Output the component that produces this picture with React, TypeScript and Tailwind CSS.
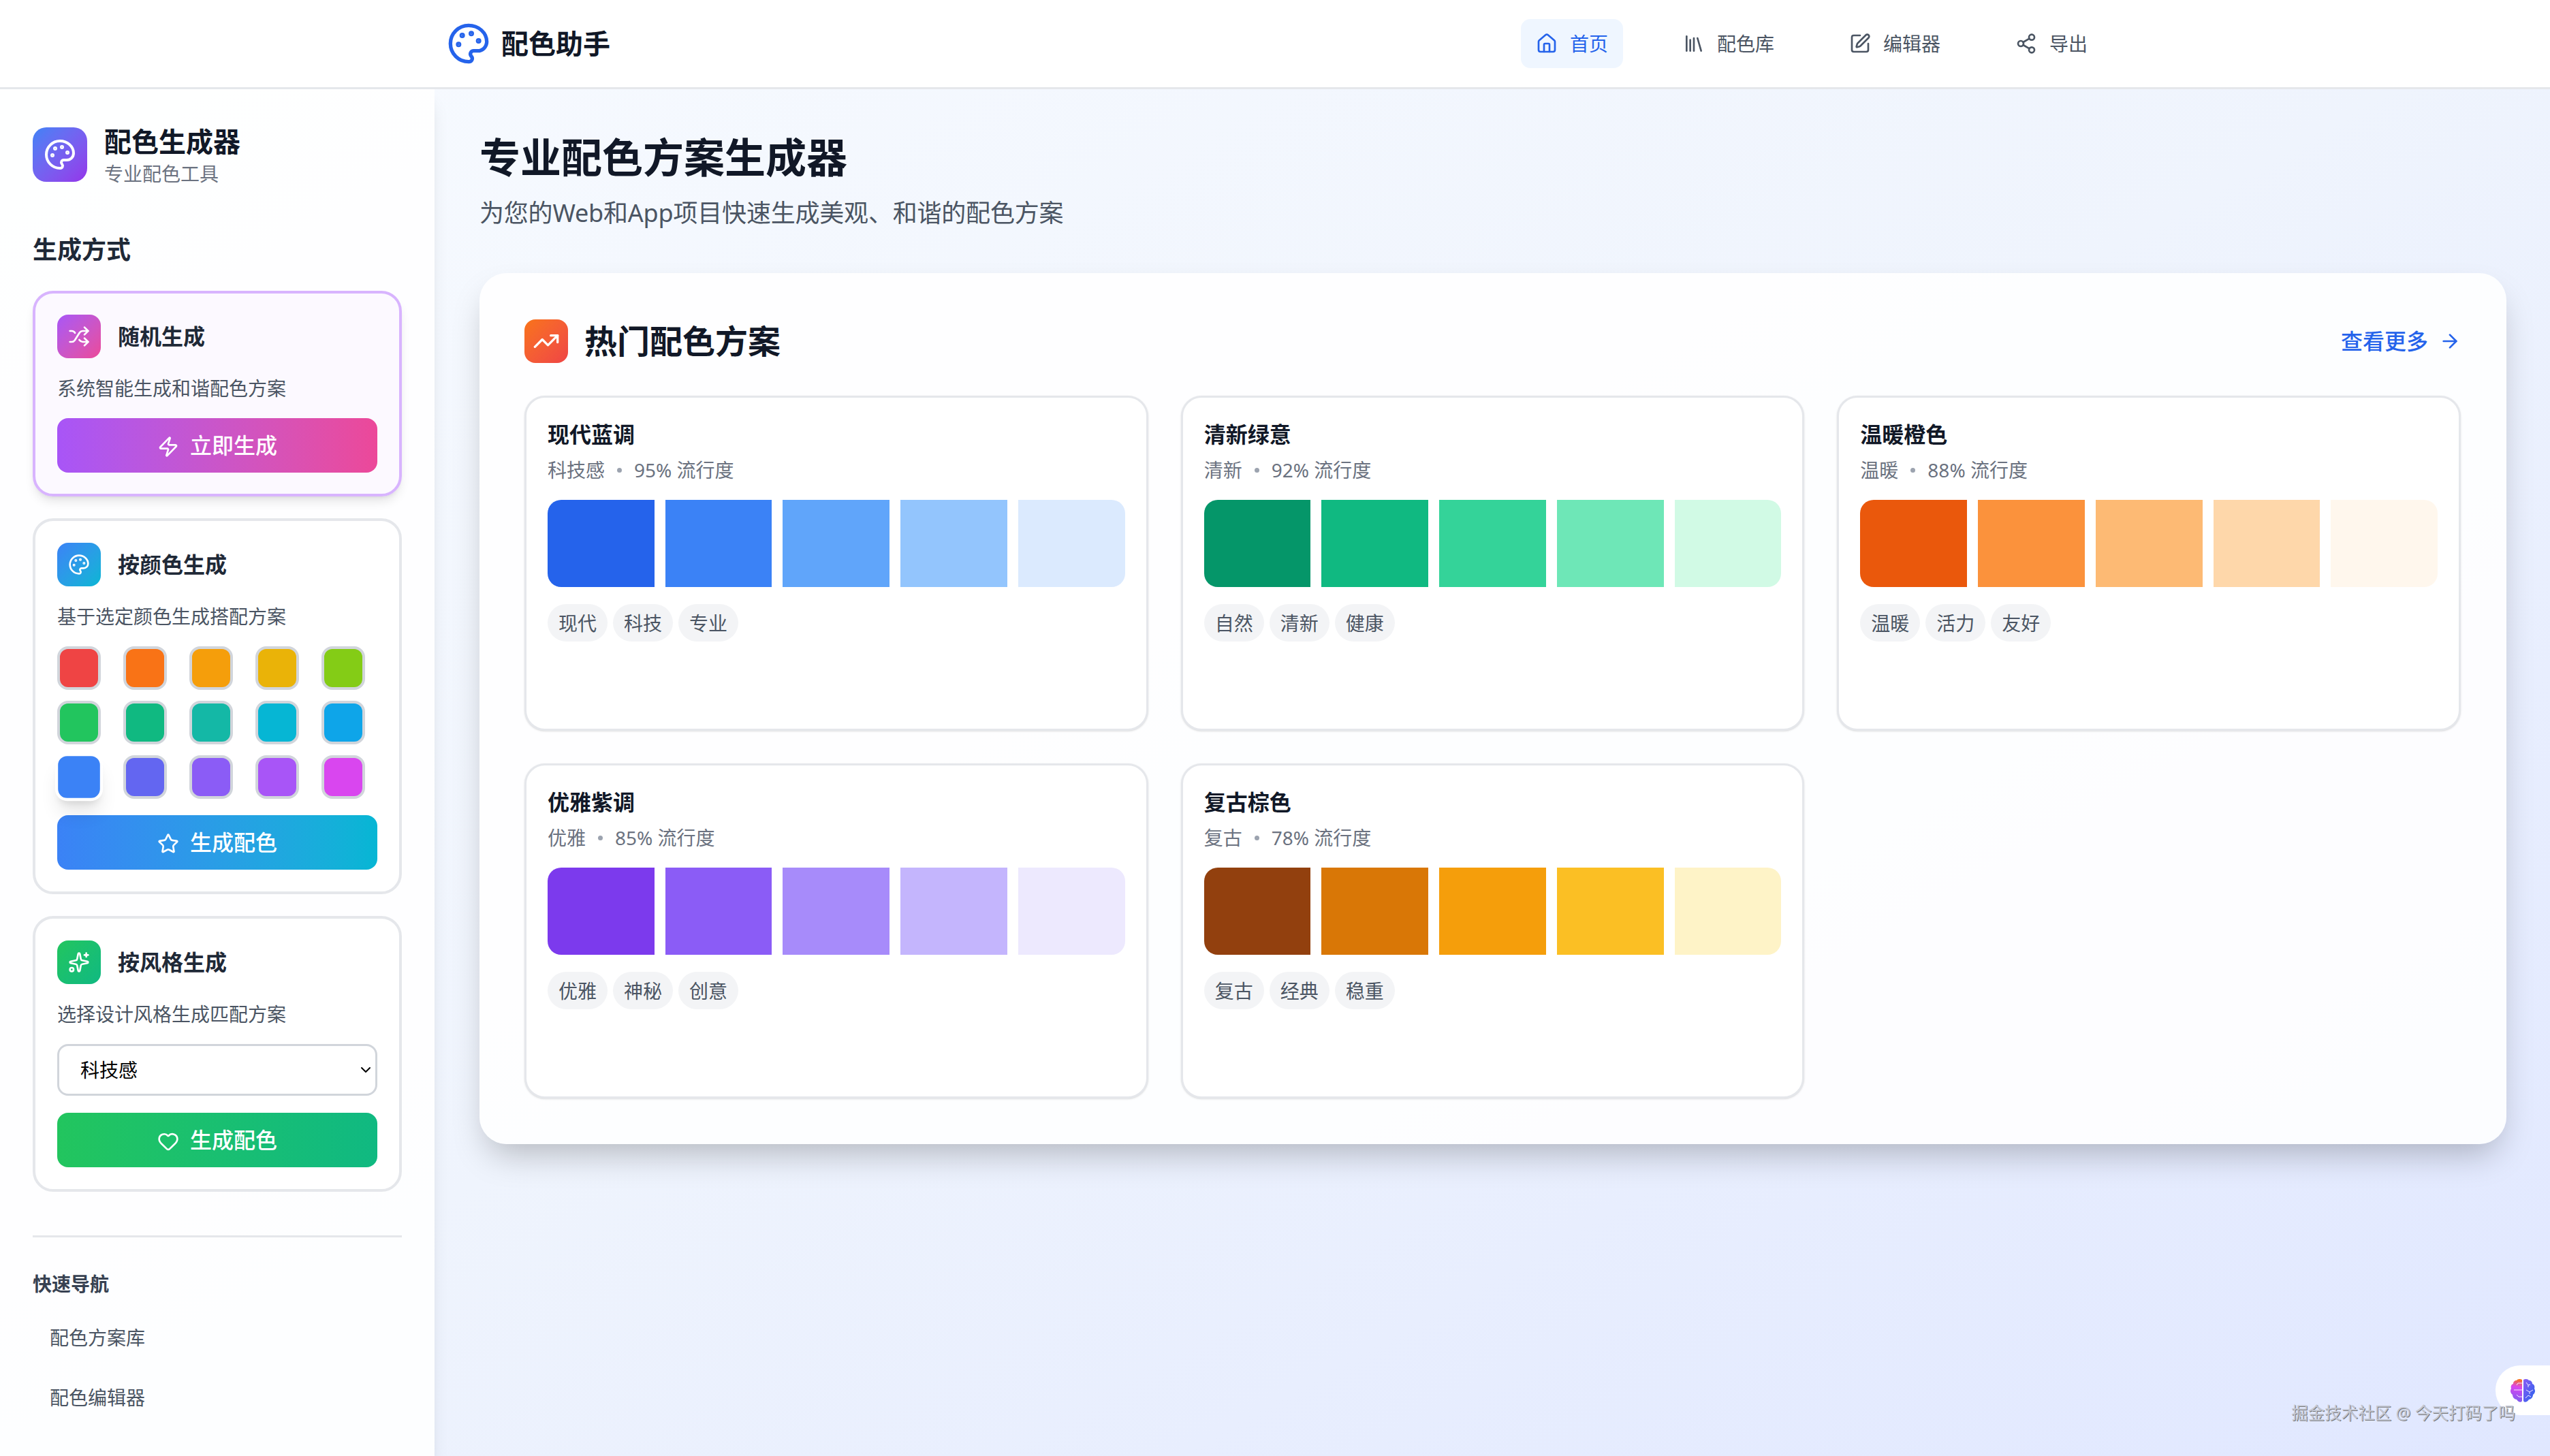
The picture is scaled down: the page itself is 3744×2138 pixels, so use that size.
import {
  ArrowRight,
  ChevronDown,
  Heart,
  House,
  Library,
  Palette,
  Share2,
  Shuffle,
  Sparkles,
  SquarePen,
  Star,
  TrendingUp,
  Zap,
} from "lucide-react";

const navItems = [
  { label: "首页", icon: House, active: true },
  { label: "配色库", icon: Library },
  { label: "编辑器", icon: SquarePen },
  { label: "导出", icon: Share2 },
];

const swatches = [
  "bg-[#ef4444]",
  "bg-[#f97316]",
  "bg-[#f59e0b]",
  "bg-[#eab308]",
  "bg-[#84cc16]",
  "bg-[#22c55e]",
  "bg-[#10b981]",
  "bg-[#14b8a6]",
  "bg-[#06b6d4]",
  "bg-[#0ea5e9]",
  "bg-[#3b82f6]",
  "bg-[#6366f1]",
  "bg-[#8b5cf6]",
  "bg-[#a855f7]",
  "bg-[#d946ef]",
];

const schemes = [
  {
    name: "现代蓝调",
    style: "科技感",
    score: "95%",
    colors: ["bg-[#2563eb]", "bg-[#3b82f6]", "bg-[#60a5fa]", "bg-[#93c5fd]", "bg-[#dbeafe]"],
    tags: ["现代", "科技", "专业"],
  },
  {
    name: "清新绿意",
    style: "清新",
    score: "92%",
    colors: ["bg-[#059669]", "bg-[#10b981]", "bg-[#34d399]", "bg-[#6ee7b7]", "bg-[#d1fae5]"],
    tags: ["自然", "清新", "健康"],
  },
  {
    name: "温暖橙色",
    style: "温暖",
    score: "88%",
    colors: ["bg-[#ea580c]", "bg-[#fb923c]", "bg-[#fdba74]", "bg-[#fed7aa]", "bg-[#fff7ed]"],
    tags: ["温暖", "活力", "友好"],
  },
  {
    name: "优雅紫调",
    style: "优雅",
    score: "85%",
    colors: ["bg-[#7c3aed]", "bg-[#8b5cf6]", "bg-[#a78bfa]", "bg-[#c4b5fd]", "bg-[#ede9fe]"],
    tags: ["优雅", "神秘", "创意"],
  },
  {
    name: "复古棕色",
    style: "复古",
    score: "78%",
    colors: ["bg-[#92400e]", "bg-[#d97706]", "bg-[#f59e0b]", "bg-[#fbbf24]", "bg-[#fef3c7]"],
    tags: ["复古", "经典", "稳重"],
  },
];

function MethodHead({ icon: Icon, title, tone }: { icon: typeof Palette; title: string; tone: string }) {
  return (
    <div className="flex items-center gap-[25px]">
      <div className={`flex h-[64px] w-[64px] items-center justify-center rounded-[16px] bg-gradient-to-br text-white ${tone}`}>
        <Icon size={32} />
      </div>
      <h3 className="text-[32px] leading-[48px] font-bold text-[#1f2937]">{title}</h3>
    </div>
  );
}

function GenButton({ icon: Icon, label, tone }: { icon: typeof Palette; label: string; tone: string }) {
  return (
    <button className={`flex h-[80px] w-full items-center justify-center gap-[16px] rounded-[16px] bg-gradient-to-r text-[32px] font-medium text-white ${tone}`}>
      <Icon size={32} className="mt-[3px]" />
      {label}
    </button>
  );
}

function SchemeCard({ scheme }: { scheme: (typeof schemes)[number] }) {
  return (
    <article className="rounded-[30px] border-[3px] border-[#e5e7eb] bg-white px-[31px] pt-[30px] shadow-sm">
      <h3 className="text-[32px] leading-[48px] font-bold text-[#111827]">{scheme.name}</h3>
      <div className="mt-[8px] flex items-center text-[28px] leading-[40px] text-[#6b7280]">
        <span>{scheme.style}</span>
        <span className="mx-[18px] h-[7px] w-[7px] rounded-full bg-[#9ca3af]" />
        <span>{scheme.score} 流行度</span>
      </div>
      <div className="mt-[24px] flex gap-[16px] overflow-hidden rounded-[20px]">
        {scheme.colors.map((color) => (
          <div key={color} className={`h-[128px] flex-1 ${color}`} />
        ))}
      </div>
      <div className="mt-[25px] flex gap-[8px]">
        {scheme.tags.map((tag) => (
          <span key={tag} className="flex h-[55px] w-[88px] items-center justify-center rounded-full bg-[#f3f4f6] text-[28px] text-[#4b5563]">
            {tag}
          </span>
        ))}
      </div>
    </article>
  );
}

function BrainMark() {
  return (
    <svg width="38" height="36" viewBox="0 0 38 36">
      <defs>
        <linearGradient id="brainLeft" x1="0.6" y1="0" x2="0.5" y2="1">
          <stop offset="0" stopColor="#f97316" />
          <stop offset="0.35" stopColor="#d946ef" />
          <stop offset="1" stopColor="#7c5cf0" />
        </linearGradient>
        <linearGradient id="brainRight" x1="0" y1="0" x2="1" y2="1">
          <stop offset="0" stopColor="#8b5cf6" />
          <stop offset="1" stopColor="#2563eb" />
        </linearGradient>
      </defs>
      <path
        d="M18 2C15 0 11 1 10 3 7 3 5 5 5 8 2 9 1 12 2 15 0 18 1 22 4 24 4 28 7 31 10 31 12 35 17 36 18 33Z"
        fill="url(#brainLeft)"
      />
      <path
        d="M20 2C23 0 27 1 28 3 31 3 33 5 33 8 36 9 37 12 36 15 38 18 37 22 34 24 34 28 31 31 28 31 26 35 21 36 20 33Z"
        fill="url(#brainRight)"
      />
      <path
        d="M18 7h-6l-2 3M18 17H6M18 27h-5l-3-3M24 6l3 4 3-1M27 10v3M24 17l5 3 5-3M29 20v3M23 29l4-4 4 2"
        fill="none"
        stroke="#f3e8ff"
        strokeWidth="1"
      />
    </svg>
  );
}

export default function App() {
  return (
    <div className="relative flex h-screen flex-col overflow-hidden bg-gradient-to-br from-[#f8fbff] via-[#eff4fd] to-[#e0e7ff] font-['Noto_Sans','Noto_Sans_CJK_SC',sans-serif]">
      <header className="h-[131px] shrink-0 border-b-[3px] border-[#e5e7eb] bg-white">
        <div className="mx-auto flex h-full w-[2434px] items-center justify-between pr-[2px]">
          <div className="flex items-center gap-[16px] pl-[1px]">
            <Palette size={64} className="text-[#2563eb]" />
            <span className="text-[40px] font-bold text-[#111827]">配色助手</span>
          </div>
          <nav className="flex gap-[66px]">
            {navItems.map(({ label, icon: Icon, active }) => (
              <a
                key={label}
                className={`flex h-[72px] items-center gap-[18px] rounded-[14px] px-[22px] text-[28px] ${
                  active ? "bg-[#eff6ff] text-[#2563eb]" : "text-[#4b5563]"
                }`}
              >
                <Icon size={32} />
                {label}
              </a>
            ))}
          </nav>
        </div>
      </header>

      <div className="flex min-h-0 flex-1">
        <aside className="w-[638px] shrink-0 bg-white/90 px-[48px] pt-[56px] shadow-xl">
          <div className="flex h-[80px] items-center gap-[25px]">
            <div className="flex h-[80px] w-[80px] items-center justify-center rounded-[20px] bg-gradient-to-br from-[#3b82f6] to-[#9333ea] text-white">
              <Palette size={48} />
            </div>
            <div>
              <h1 className="text-[40px] leading-[48px] font-bold text-[#111827]">配色生成器</h1>
              <p className="mt-[7px] text-[28px] leading-[32px] text-[#6b7280]">专业配色工具</p>
            </div>
          </div>

          <h2 className="mt-[73px] text-[36px] leading-[54px] font-bold text-[#1f2937]">生成方式</h2>

          <div className="mt-[33px] flex flex-col gap-[32px]">
            <section className="rounded-[30px] border-[4px] border-[#d8b4fe] bg-[#faf5ff]/60 px-[32px] py-[31px] shadow-lg">
              <MethodHead icon={Shuffle} title="随机生成" tone="from-[#a855f7] to-[#ec4899]" />
              <p className="mt-[24px] text-[28px] leading-[40px] text-[#4b5563]">系统智能生成和谐配色方案</p>
              <div className="mt-[24px]">
                <GenButton icon={Zap} label="立即生成" tone="from-[#a855f7] to-[#ec4899]" />
              </div>
            </section>

            <section className="rounded-[30px] border-[4px] border-[#e5e7eb] bg-white px-[32px] py-[32px]">
              <MethodHead icon={Palette} title="按颜色生成" tone="from-[#3b82f6] to-[#06b6d4]" />
              <p className="mt-[24px] text-[28px] leading-[40px] text-[#4b5563]">基于选定颜色生成搭配方案</p>
              <div className="mt-[24px] grid grid-cols-[repeat(5,64px)] gap-x-[33px] gap-y-[16px]">
                {swatches.map((color) => (
                  <div
                    key={color}
                    className={`h-[64px] w-[64px] rounded-[16px] border-[4px] ${color} ${
                      color === "bg-[#3b82f6]" ? "scale-110 border-white shadow-xl" : "border-[#d1d5db]"
                    }`}
                  />
                ))}
              </div>
              <div className="mt-[24px]">
                <GenButton icon={Star} label="生成配色" tone="from-[#3b82f6] to-[#06b6d4]" />
              </div>
            </section>

            <section className="rounded-[30px] border-[4px] border-[#e5e7eb] bg-white px-[32px] py-[32px]">
              <MethodHead icon={Sparkles} title="按风格生成" tone="from-[#22c55e] to-[#10b981]" />
              <p className="mt-[24px] text-[28px] leading-[40px] text-[#4b5563]">选择设计风格生成匹配方案</p>
              <div className="relative mt-[24px]">
                <select className="h-[76px] w-full appearance-none rounded-[16px] border-[3px] border-[#d1d5db] bg-white pl-[31px] text-[28px] text-black">
                  <option>科技感</option>
                </select>
                <ChevronDown size={24} className="pointer-events-none absolute top-[26px] right-[5px] text-black" />
              </div>
              <div className="mt-[25px]">
                <GenButton icon={Heart} label="生成配色" tone="from-[#22c55e] to-[#10b981]" />
              </div>
            </section>
          </div>

          <div className="mt-[64px] border-t-[3px] border-[#e5e7eb] pt-[48px]">
            <h4 className="text-[28px] leading-[40px] font-bold text-[#374151]">快速导航</h4>
            <div className="mt-[15px] flex flex-col">
              <a className="px-[25px] py-[24px] text-[28px] leading-[40px] text-[#4b5563]">配色方案库</a>
              <a className="px-[25px] py-[24px] text-[28px] leading-[40px] text-[#4b5563]">配色编辑器</a>
            </div>
          </div>
        </aside>

        <main className="min-w-0 flex-1 pt-[64px] pr-[64px] pl-[66px]">
          <h1 className="text-[60px] leading-[72px] font-bold text-[#111827]">专业配色方案生成器</h1>
          <p className="mt-[22px] text-[36px] leading-[48px] tracking-[-0.2px] text-[#4b5563]">为您的Web和App项目快速生成美观、和谐的配色方案</p>

          <section className="mt-[64px] rounded-[40px] bg-white/90 pt-[68px] pr-[67px] pb-[67px] pl-[66px] shadow-2xl">
            <div className="flex items-center justify-between">
              <div className="flex items-center gap-[24px]">
                <div className="flex h-[64px] w-[64px] items-center justify-center rounded-[16px] bg-gradient-to-br from-[#f97316] to-[#ef4444] text-white">
                  <TrendingUp size={40} />
                </div>
                <h2 className="text-[48px] leading-[64px] font-bold text-[#111827]">热门配色方案</h2>
              </div>
              <a className="flex items-center gap-[16px] text-[32px] font-medium text-[#2563eb]">
                查看更多
                <ArrowRight size={32} />
              </a>
            </div>

            <div className="mt-[48px] grid grid-cols-3 auto-rows-[492px] gap-x-[48px] gap-y-[48px]">
              {schemes.map((scheme) => (
                <SchemeCard key={scheme.name} scheme={scheme} />
              ))}
            </div>
          </section>
        </main>
      </div>

      <div className="absolute right-0 bottom-[60px] flex h-[73px] w-[80px] items-center rounded-l-[36px] bg-white pl-[21px]">
        <BrainMark />
      </div>
      <span className="absolute right-[51px] bottom-[48px] text-[24.5px] leading-[30px] text-[#c4c8d4] [text-shadow:1px_1px_0_#777777]">
        掘金技术社区 @ 今天打码了吗
      </span>
    </div>
  );
}
